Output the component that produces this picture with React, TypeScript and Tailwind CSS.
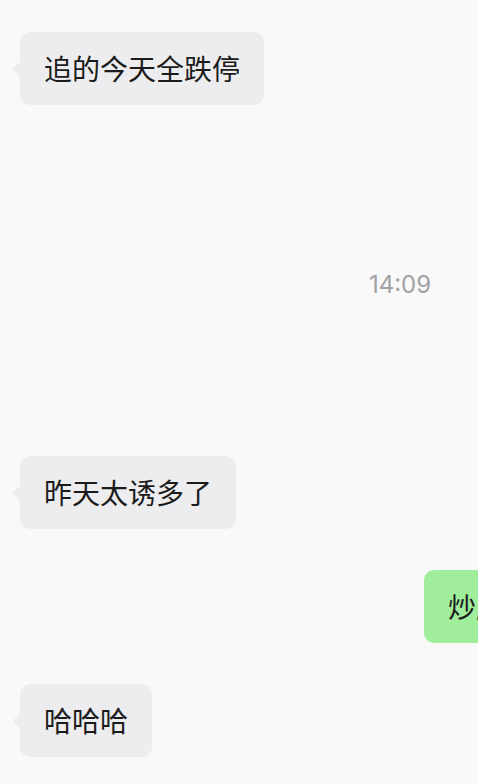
import React from "react";

type Msg =
  | { kind: "in"; text: string; className?: string }
  | { kind: "out"; text: string; className?: string }
  | { kind: "time"; text: string; className?: string };

const messages: Msg[] = [
  { kind: "in", text: "追的今天全跌停", className: "mt-8" },
  { kind: "time", text: "14:09", className: "mt-[164px]" },
  { kind: "in", text: "昨天太诱多了", className: "mt-[155px]" },
  { kind: "out", text: "炒股这几天亏惨了啊哈哈", className: "mt-[41px]" },
  { kind: "in", text: "哈哈哈", className: "mt-[41px]" },
];

const Bubble: React.FC<{ text: string; out?: boolean }> = ({ text, out }) => (
  <div
    className={`relative rounded-[10px] px-6 py-4 text-[28px] leading-[41px] text-[#1b1b1b] ${
      out ? "bg-[#a0ed9b]" : "bg-[#ededef]"
    }`}
  >
    <span
      className={`absolute top-1/2 h-3 w-3 -translate-y-1/2 rotate-45 rounded-[2px] ${
        out ? "-right-[5px] bg-[#a0ed9b]" : "-left-[5px] bg-[#ededef]"
      }`}
    />
    <span className="relative">{text}</span>
  </div>
);

export default function App() {
  return (
    <div className="h-screen w-full overflow-hidden bg-[#f9f9f9]">
      <div
        className="flex w-[800px] flex-col px-5"
        style={{ fontFamily: '"Noto Sans CJK SC", "Noto Sans", sans-serif' }}
      >
        {messages.map((m, i) => {
          if (m.kind === "time") {
            return (
              <div
                key={i}
                className={`text-center text-[24px] leading-[32px] text-[#a1a1a6] ${m.className ?? ""}`}
                style={{ fontFamily: "Inter, sans-serif" }}
              >
                {m.text}
              </div>
            );
          }
          return (
            <div
              key={i}
              className={`flex ${m.kind === "out" ? "justify-end" : "justify-start"} ${m.className ?? ""}`}
            >
              <Bubble text={m.text} out={m.kind === "out"} />
            </div>
          );
        })}
      </div>
    </div>
  );
}
